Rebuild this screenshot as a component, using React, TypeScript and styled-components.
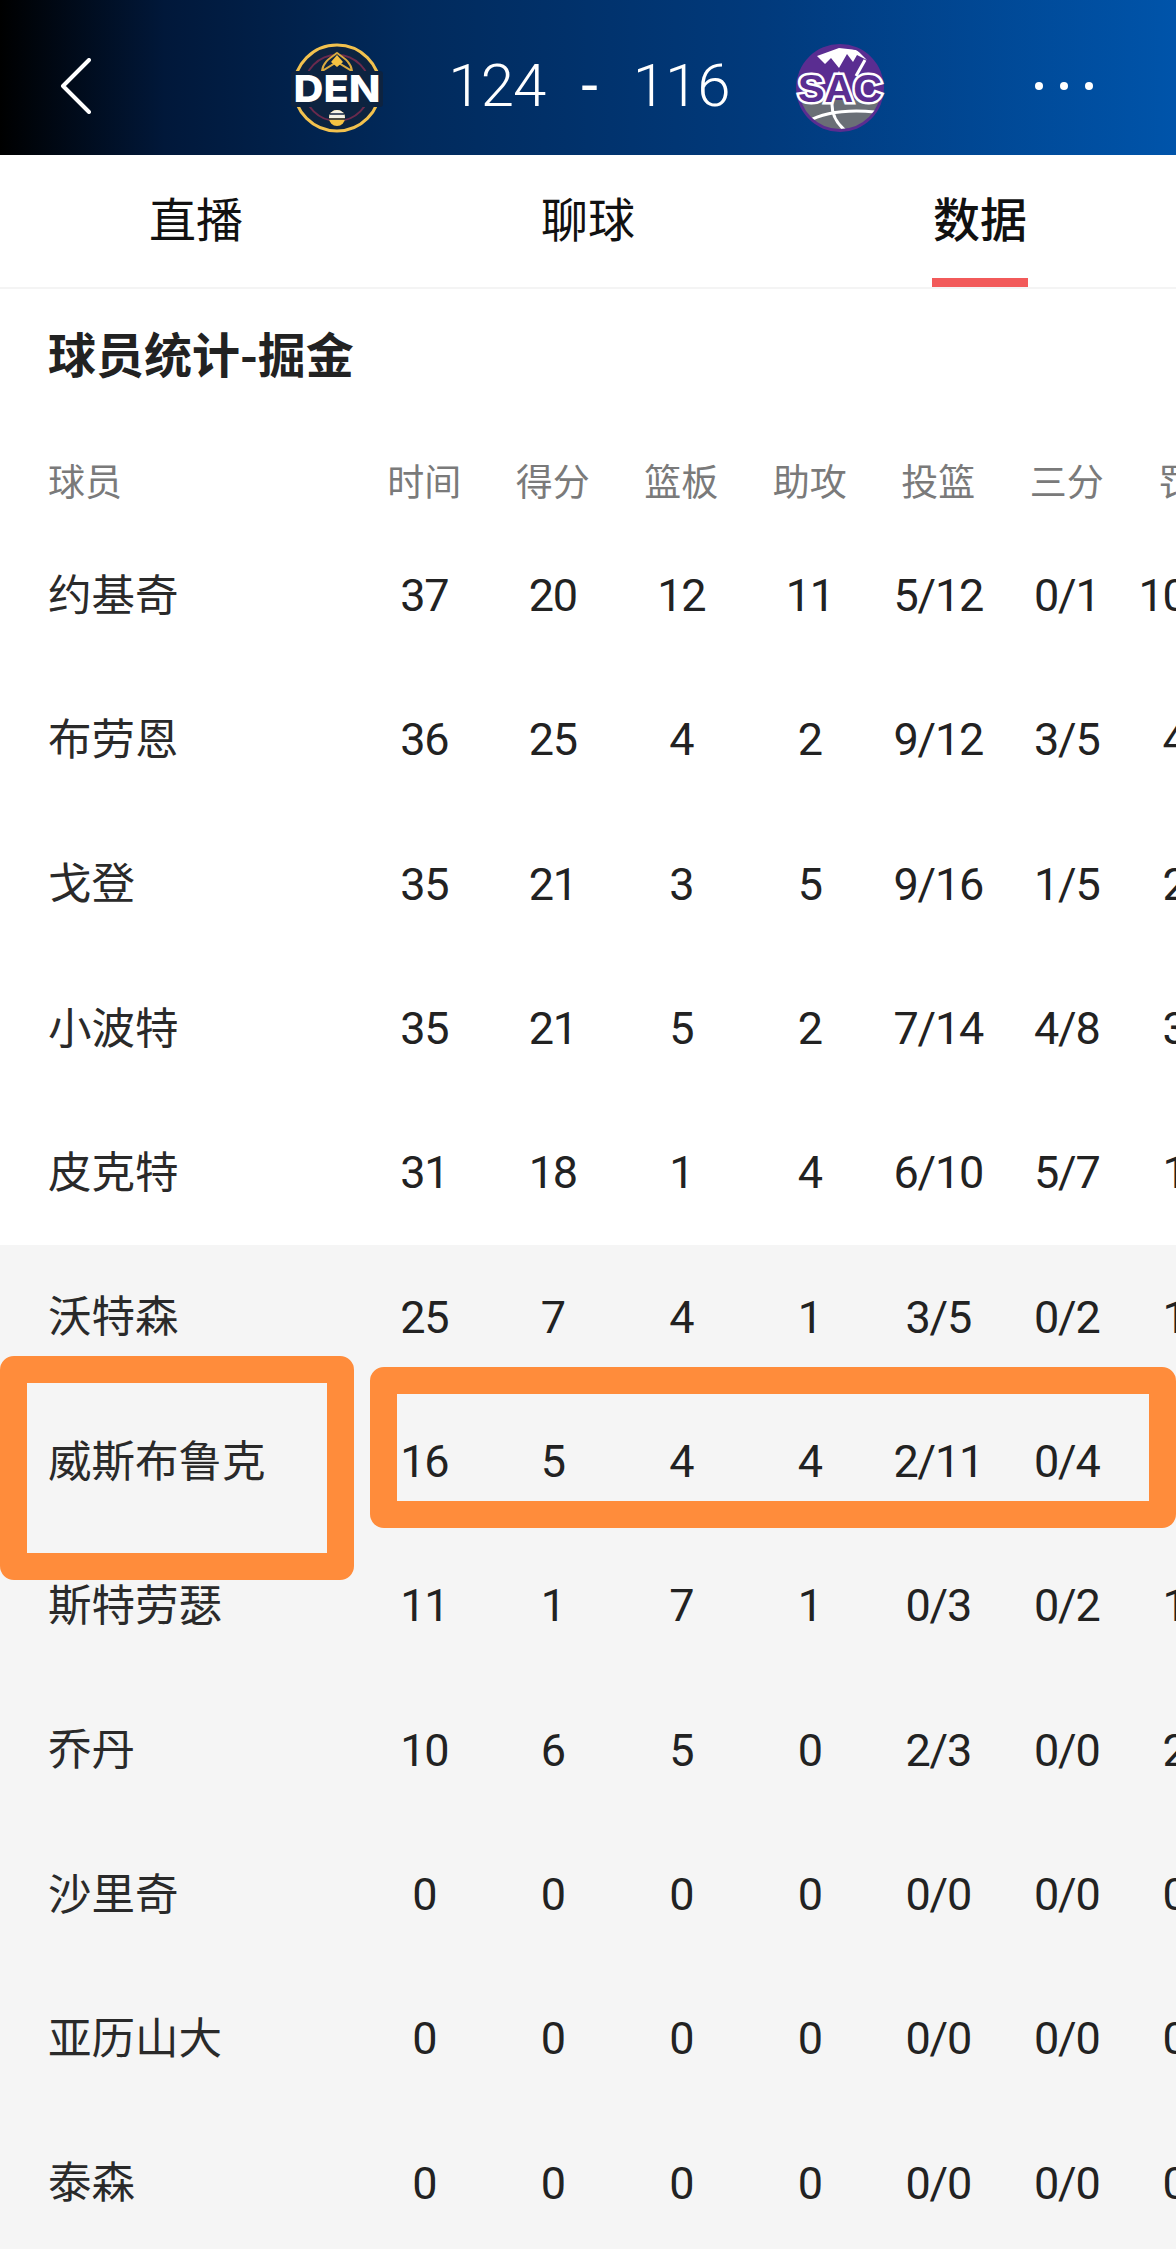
import styled, { createGlobalStyle } from "styled-components";

const columns = ["时间", "得分", "篮板", "助攻", "投篮", "三分", "罚球"];

const players: { name: string; stats: string[]; bench?: boolean }[] = [
  { name: "约基奇", stats: ["37", "20", "12", "11", "5/12", "0/1", "10/11"] },
  { name: "布劳恩", stats: ["36", "25", "4", "2", "9/12", "3/5", "4/4"] },
  { name: "戈登", stats: ["35", "21", "3", "5", "9/16", "1/5", "2/2"] },
  { name: "小波特", stats: ["35", "21", "5", "2", "7/14", "4/8", "3/3"] },
  { name: "皮克特", stats: ["31", "18", "1", "4", "6/10", "5/7", "1/1"] },
  { name: "沃特森", stats: ["25", "7", "4", "1", "3/5", "0/2", "1/2"], bench: true },
  { name: "威斯布鲁克", stats: ["16", "5", "4", "4", "2/11", "0/4", "1/2"], bench: true },
  { name: "斯特劳瑟", stats: ["11", "1", "7", "1", "0/3", "0/2", "1/2"], bench: true },
  { name: "乔丹", stats: ["10", "6", "5", "0", "2/3", "0/0", "2/2"], bench: true },
  { name: "沙里奇", stats: ["0", "0", "0", "0", "0/0", "0/0", "0/0"], bench: true },
  { name: "亚历山大", stats: ["0", "0", "0", "0", "0/0", "0/0", "0/0"], bench: true },
  { name: "泰森", stats: ["0", "0", "0", "0", "0/0", "0/0", "0/0"], bench: true },
];

function DenLogo() {
  return (
    <svg width="92" height="92" viewBox="0 0 92 92">
      <circle cx="46" cy="46" r="43" fill="#0d2340" stroke="#f2c14e" strokeWidth="3" />
      <circle cx="46" cy="46" r="33" fill="none" stroke="#6b2a4d" strokeWidth="2" />
      <path d="M31 29 C32 20 39 16 46 11 C53 16 60 20 61 29 L46 20 Z" fill="#0d2340" stroke="#d9a93f" strokeWidth="2" />
      <path d="M46 13 L52 20 L46 25 L40 20 Z" fill="#f5c242" />
      <rect x="0" y="29" width="92" height="36" rx="3" fill="#0d2340" />
      <text
        x="46"
        y="60"
        textAnchor="middle"
        fontFamily="Inter, sans-serif"
        fontWeight="800"
        fontSize="37"
        fill="#fff"
        textLength="87"
        lengthAdjust="spacingAndGlyphs"
      >
        DEN
      </text>
      <circle cx="46" cy="76" r="8" fill="#f5c242" />
      <path d="M38 76 A8 8 0 0 1 54 76 Z" fill="#f4f1e6" />
      <path d="M39 72 H53 M38 77 H54" stroke="#15233f" strokeWidth="1.5" />
    </svg>
  );
}

function SacLogo() {
  return (
    <svg width="90" height="92" viewBox="0 0 90 92">
      <defs>
        <clipPath id="sacClip">
          <circle cx="45" cy="46" r="41" />
        </clipPath>
      </defs>
      <circle cx="45" cy="46" r="44" fill="#5a2d91" />
      <g clipPath="url(#sacClip)">
        <rect x="0" y="58" width="90" height="34" fill="#6a6f76" />
        <path d="M22 14 L44 6 L62 8 L72 18 L62 13 L58 20 L52 12 L44 26 L36 16 L30 22 Z" fill="#fff" />
        <path d="M70 18 L61 34" stroke="#fff" strokeWidth="3" />
        <path d="M12 80 Q36 66 80 70 M37 60 Q36 78 52 90" fill="none" stroke="#fff" strokeWidth="3" />
      </g>
      <text
        x="45"
        y="60"
        textAnchor="middle"
        fontFamily="Liberation Sans, sans-serif"
        fontWeight="700"
        fontSize="38"
        fill="#5a2d91"
        stroke="#fff"
        strokeWidth="5"
        textLength="84"
        lengthAdjust="spacingAndGlyphs"
        style={{ paintOrder: "stroke" }}
      >
        SAC
      </text>
    </svg>
  );
}

export default function App() {
  return (
    <>
      <GlobalStyle />
      <Page>
        <Header>
          <BackButton>
            <svg width="32" height="56" viewBox="0 0 32 56">
              <path d="M29 2 L3 28 L29 54" fill="none" stroke="#fff" strokeWidth="4" strokeLinecap="round" strokeLinejoin="round" />
            </svg>
          </BackButton>
          <Scoreboard>
            <DenLogo />
            <Score>
              <span>124</span>
              <Dash>-</Dash>
              <span>116</span>
            </Score>
            <SacLogo />
          </Scoreboard>
          <MoreButton>
            <Dot />
            <Dot />
            <Dot />
          </MoreButton>
        </Header>

        <Tabs>
          <Tab>直播</Tab>
          <Tab>聊球</Tab>
          <Tab $active>数据</Tab>
        </Tabs>

        <Title>球员统计-掘金</Title>

        <StatsTable>
          <HeadRow>
            <span>球员</span>
            {columns.map((column) => (
              <Cell key={column}>{column}</Cell>
            ))}
          </HeadRow>
          {players.map((player) => (
            <PlayerRow key={player.name} $bench={player.bench}>
              <PlayerName>{player.name}</PlayerName>
              {player.stats.map((stat, i) => (
                <StatCell key={i}>{stat}</StatCell>
              ))}
            </PlayerRow>
          ))}
        </StatsTable>

        <NameMark />
        <StatsMark />
      </Page>
    </>
  );
}

const GlobalStyle = createGlobalStyle`
  html, body {
    margin: 0;
    padding: 0;
    background: #fff;
  }
`;

const Page = styled.div`
  position: relative;
  width: 1176px;
  height: 2249px;
  overflow: hidden;
  background: #fff;
  color: #222;
  font-family: "Noto Sans CJK SC", "Noto Sans", sans-serif;
`;

const Header = styled.header`
  display: grid;
  grid-template-columns: 1fr auto 1fr;
  align-items: center;
  height: 155px;
  padding: 20px 60px 0 60px;
  box-sizing: border-box;
  background: linear-gradient(90deg, #000 0%, #01183a 14%, #012a5c 35%, #013a7c 65%, #0054aa 100%);
`;

const BackButton = styled.div`
  display: flex;
  justify-content: flex-start;
  padding-bottom: 4px;
`;

const Scoreboard = styled.div`
  display: flex;
  align-items: center;
  gap: 65px;
`;

const Score = styled.div`
  display: flex;
  align-items: center;
  gap: 36px;
  color: #fff;
  font-family: Roboto, sans-serif;
  font-weight: 300;
  font-size: 60px;
  line-height: 66px;
  letter-spacing: -1px;
  padding-bottom: 4px;
`;

const Dash = styled.span`
  font-weight: 400;
`;

const MoreButton = styled.div`
  display: flex;
  justify-content: flex-end;
  align-items: center;
  gap: 17px;
  padding-right: 23px;
  padding-bottom: 4px;
`;

const Dot = styled.i`
  display: block;
  width: 8px;
  height: 8px;
  border-radius: 50%;
  background: #fff;
`;

const Tabs = styled.nav`
  display: grid;
  grid-template-columns: repeat(3, 1fr);
  height: 134px;
  box-sizing: border-box;
  border-bottom: 2px solid #f4f4f4;
`;

const Tab = styled.div<{ $active?: boolean }>`
  position: relative;
  display: flex;
  align-items: center;
  justify-content: center;
  padding-bottom: 10px;
  font-size: 47px;
  line-height: 1;
  color: #111;
  font-weight: ${(p) => (p.$active ? 500 : 400)};

  &::after {
    content: "";
    display: ${(p) => (p.$active ? "block" : "none")};
    position: absolute;
    left: 50%;
    bottom: 0;
    width: 96px;
    height: 9px;
    margin-left: -48px;
    background: #f25a5a;
  }
`;

const Title = styled.h2`
  margin: 0;
  padding: 30px 48px 56px;
  font-size: 48px;
  line-height: 66px;
  font-weight: 700;
  color: #222;
`;

const StatsTable = styled.div`
  width: 1176px;
  overflow: hidden;
`;

const HeadRow = styled.div`
  display: grid;
  grid-template-columns: 312px repeat(7, 128.5px);
  align-items: center;
  width: 1260px;
  height: 82px;
  padding: 0 0 4px 48px;
  box-sizing: border-box;
  font-size: 37px;
  color: #7a7a7a;
`;

const Cell = styled.span`
  text-align: center;
  white-space: nowrap;
`;

const PlayerRow = styled.div<{ $bench?: boolean }>`
  display: grid;
  grid-template-columns: 312px repeat(7, 128.5px);
  align-items: center;
  width: 1260px;
  height: 144.33px;
  padding-left: 48px;
  box-sizing: border-box;
  background: ${(p) => (p.$bench ? "#f5f5f5" : "#fff")};
`;

const PlayerName = styled.span`
  font-size: 43.5px;
  color: #2a2a2a;
  padding-bottom: 6px;
`;

const StatCell = styled.span`
  text-align: center;
  white-space: nowrap;
  font-family: Roboto, sans-serif;
  font-size: 45px;
  letter-spacing: -1.2px;
  color: #222;
  padding-top: 1px;
`;

const NameMark = styled.div`
  position: absolute;
  left: 0;
  top: 1356px;
  width: 354px;
  height: 224px;
  box-sizing: border-box;
  border: 27px solid #ff8c3b;
  border-radius: 14px;
`;

const StatsMark = styled.div`
  position: absolute;
  left: 370px;
  top: 1367px;
  width: 806px;
  height: 161px;
  box-sizing: border-box;
  border: 27px solid #ff8c3b;
  border-radius: 14px;
`;
